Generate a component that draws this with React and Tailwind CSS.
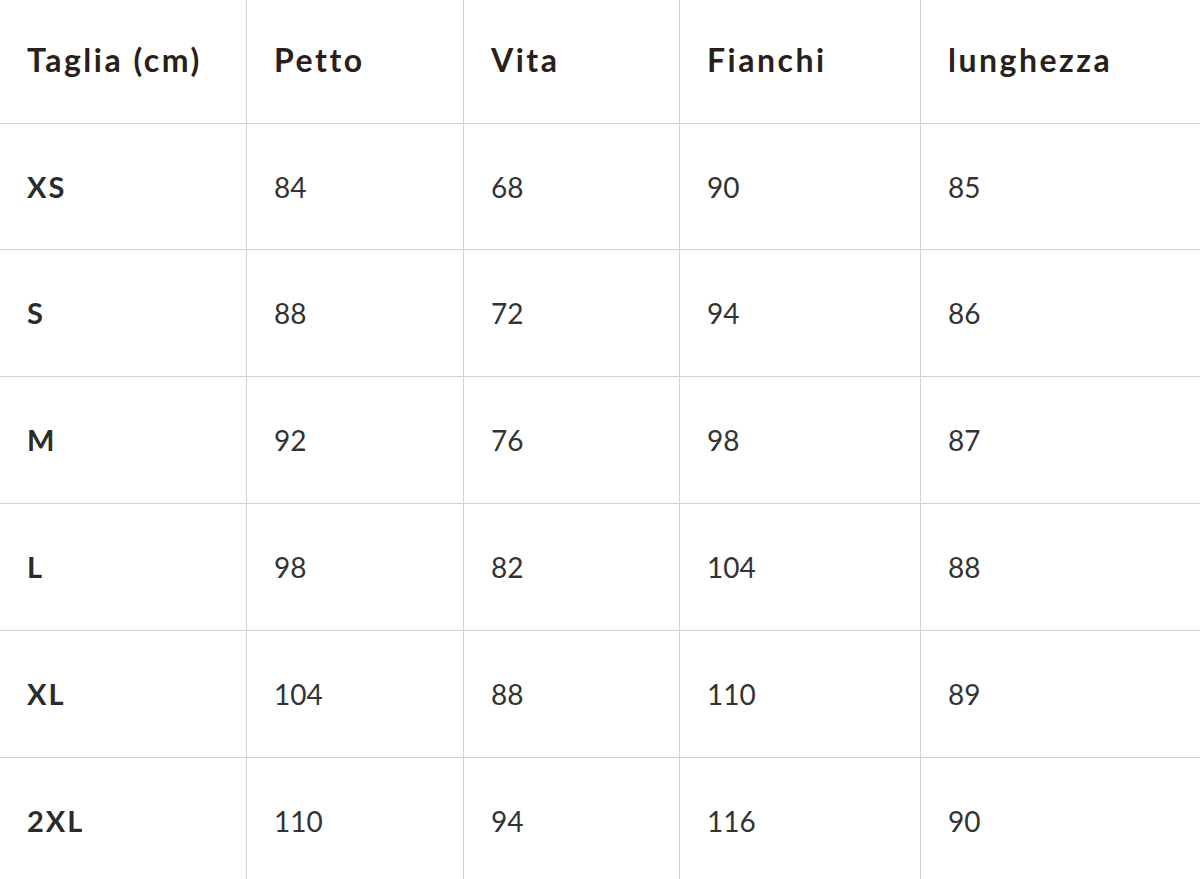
const headers = ['Taglia (cm)', 'Petto', 'Vita', 'Fianchi', 'lunghezza'];

const rows = [
  ['XS', '84', '68', '90', '85'],
  ['S', '88', '72', '94', '86'],
  ['M', '92', '76', '98', '87'],
  ['L', '98', '82', '104', '88'],
  ['XL', '104', '88', '110', '89'],
  ['2XL', '110', '94', '116', '90'],
];

const App = () => {
  return (
    <div className="w-[1200px] h-[879px] overflow-hidden bg-white" style={{ fontFamily: 'Lato, "Open Sans", sans-serif' }}>
      <div className="grid grid-cols-[247px_217px_216px_241px_1fr]">
        {/* Header */}
        {headers.map((h, i) => (
          <div
            key={h}
            className={`h-[124px] flex items-center pl-[27px] pb-[3px] border-b border-[#d2d2d2] text-[32px] tracking-[2.5px] font-bold text-[#2b1f19] ${
              i < headers.length - 1 ? 'border-r' : ''
            }`}
          >
            {h}
          </div>
        ))}

        {/* Body */}
        {rows.map((row, r) =>
          row.map((cell, c) => (
            <div
              key={`${r}-${c}`}
              className={`flex items-center pl-[27px] border-b border-[#d2d2d2] text-[28px] ${
                r === 0 ? 'h-[126px]' : 'h-[127px]'
              } ${c < row.length - 1 ? 'border-r' : ''} ${
                c === 0 ? 'font-bold text-[29px] tracking-[2px] text-[#2b2b2b]' : 'text-[#333333]'
              }`}
            >
              {cell}
            </div>
          ))
        )}
      </div>
    </div>
  );
};

export default App;
